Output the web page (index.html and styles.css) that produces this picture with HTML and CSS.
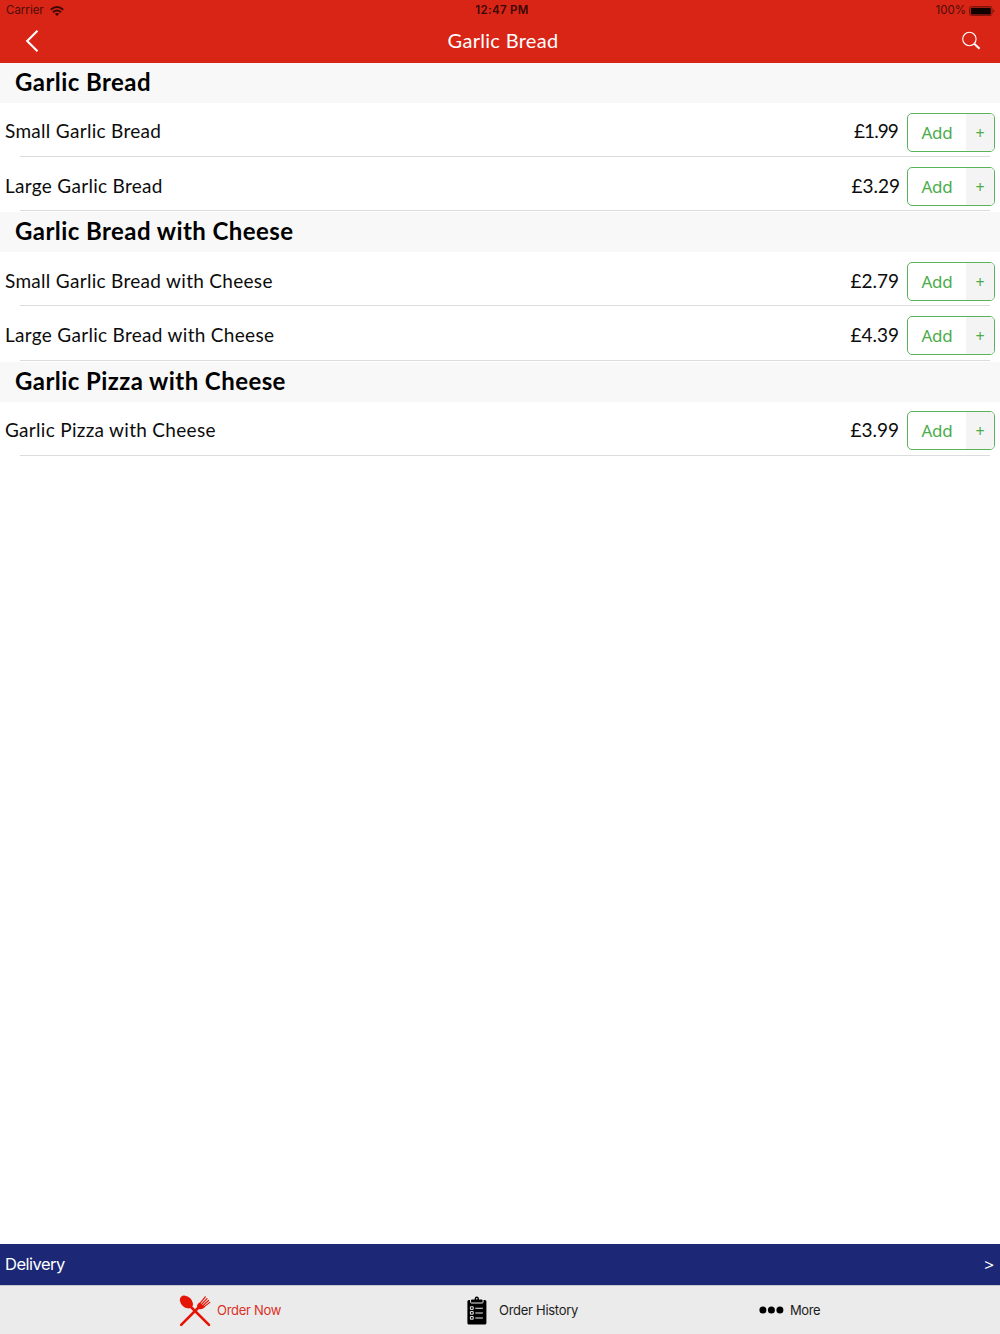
FILE: index.html
```html
<!DOCTYPE html>
<html lang="en">
<head>
<meta charset="utf-8">
<title>Garlic Bread</title>
<link rel="stylesheet" href="styles.css">
</head>
<body>
<div class="screen">
  <header class="header">
    <div class="status">
      <div class="carrier"><span>Carrier</span>
        <svg width="14" height="10" viewBox="0 0 14 10"><g fill="none" stroke="#3a0805" stroke-width="1.9"><path d="M.8 3.8Q7-1.6 13.2 3.8"/><path d="M3 6.2Q7 2.8 11 6.2"/></g><path d="M7 10 4.8 7.7Q7 6.2 9.2 7.7Z" fill="#3a0805"/></svg>
      </div>
      <div class="time">12:47 PM</div>
      <div class="battery"><span>100%</span>
        <svg width="26" height="10" viewBox="0 0 26 10"><rect x=".5" y=".5" width="22.5" height="9" rx="2" fill="none" stroke="#7c140c"/><rect x="1.8" y="1.7" width="20" height="6.8" rx="1" fill="#100201"/><path d="M24.3 3.4Q26.4 5 24.3 6.6Z" fill="#5a0e08"/></svg>
      </div>
    </div>
    <nav class="nav">
      <svg class="back" width="14" height="24" viewBox="0 0 14 24"><path d="M12.5 1.8 2.2 12l10.3 10.2" fill="none" stroke="#fff" stroke-width="2.1"/></svg>
      <h1 class="title">Garlic Bread</h1>
      <svg class="search" width="20" height="20" viewBox="0 0 20 20"><circle cx="8.4" cy="8" r="6.7" fill="none" stroke="#fff" stroke-width="1.1"/><path d="m13.2 12.8 5.4 5" stroke="#fff" stroke-width="2"/></svg>
    </nav>
  </header>

  <main class="menu">
    <section class="group">
      <h2 class="heading">Garlic Bread</h2>
      <div class="item"><span class="name">Small Garlic Bread</span><span class="price narrow">£1.99</span><button class="add"><span class="label">Add</span><span class="plus">+</span></button></div>
      <div class="item"><span class="name">Large Garlic Bread</span><span class="price wide">£3.29</span><button class="add"><span class="label">Add</span><span class="plus">+</span></button></div>
    </section>
    <section class="group">
      <h2 class="heading">Garlic Bread with Cheese</h2>
      <div class="item"><span class="name">Small Garlic Bread with Cheese</span><span class="price">£2.79</span><button class="add"><span class="label">Add</span><span class="plus">+</span></button></div>
      <div class="item"><span class="name">Large Garlic Bread with Cheese</span><span class="price">£4.39</span><button class="add"><span class="label">Add</span><span class="plus">+</span></button></div>
    </section>
    <section class="group">
      <h2 class="heading">Garlic Pizza with Cheese</h2>
      <div class="item"><span class="name">Garlic Pizza with Cheese</span><span class="price">£3.99</span><button class="add"><span class="label">Add</span><span class="plus">+</span></button></div>
    </section>
  </main>

  <div class="delivery"><span class="delivery-label">Delivery</span><span class="arrow">&gt;</span></div>

  <footer class="tabs">
    <a class="tab order">
      <svg width="32" height="32" viewBox="0 0 32 32"><g fill="none" stroke="#e51405" stroke-linecap="round"><path d="M10 10 30 29.8" stroke-width="2.6"/><path d="M21 11 2.2 29.8" stroke-width="2.6"/><g stroke-width="1.2"><path d="m20.5 8.8 5.8-7"/><path d="m22 10 6-6.4"/><path d="m23.3 11.3 6.2-5.8"/><path d="m24.4 12.4 6.4-5"/></g></g><path d="M20.6 7.6 25.8 12.2Q22.6 15.2 19.8 14l-1.6-1.8Q17.4 9.8 20.6 7.6Z" fill="#e51405"/><ellipse cx="7.4" cy="7" rx="7.5" ry="5.3" transform="rotate(43 7.4 7)" fill="#e51405"/></svg>
      <span>Order Now</span>
    </a>
    <a class="tab history">
      <svg width="20" height="29" viewBox="0 0 20 29"><rect x=".4" y="4" width="19" height="24.6" rx="1.6"/><path d="M3.6 3.6v2.6q0 .8.8.8h10.8q.8 0 .8-.8V3.6" fill="none" stroke="#ebebeb" stroke-width="1"/><path d="M4.4 5.8V3.6h3.2Q7.6.5 9.8.5T12 3.6h3.2v2.2Z"/><circle cx="9.8" cy="2.8" r=".8" fill="#ebebeb"/><g fill="none" stroke="#ebebeb"><path d="M3.4 10.8h2.8v2.6H3.4zM3.4 15.6h2.8v2.6H3.4zM3.4 20.6h2.8v2.6H3.4z" stroke-width="1"/><path d="M8.3 12.2h7.6M8.3 17h7.6M8.3 22h7.6" stroke-width="1.1"/></g></svg>
      <span>Order History</span>
    </a>
    <a class="tab more">
      <svg width="25" height="8" viewBox="0 0 25 8"><circle cx="3.9" cy="4" r="3.5"/><circle cx="12.4" cy="4" r="3.5"/><circle cx="20.9" cy="4" r="3.5"/></svg>
      <span>More</span>
    </a>
  </footer>
</div>
</body>
</html>
```
FILE: styles.css
```css
* { box-sizing: border-box; }
body { margin: 0; background: #fff; color: #0c0c0c; font-family: Lato, sans-serif; }
svg { display: block; flex: none; }
.screen { width: 1000px; height: 1334px; display: flex; flex-direction: column; }

.header { height: 63px; background: #d92516; flex: none; }
.status { height: 20px; display: grid; grid-template-columns: 1fr auto 1fr; align-items: center; padding: 1px 5px 0 6px; font: 11.5px/19px Inter, sans-serif; color: #4d0d08; }
.carrier { display: flex; align-items: center; gap: 6px; }
.time { font-weight: 600; letter-spacing: .3px; color: #3a0805; padding-left: 3px; }
.battery { display: flex; align-items: center; justify-content: flex-end; gap: 3px; }
.nav { height: 43px; display: grid; grid-template-columns: 1fr auto 1fr; align-items: center; padding: 0 19px 0 25px; }
.title { margin: 0; padding: 0 0 4px; font-size: 20px; line-height: 24px; font-weight: 400; color: #fff; letter-spacing: .3px; }
.nav .back { margin-bottom: 1px; }
.search { justify-self: end; margin-bottom: 2px; }

.menu { flex: 1; display: flex; flex-direction: column; gap: .9px; }
.heading { margin: 0; height: 40px; padding-left: 15px; background: #f8f8f8; color: #000; font-size: 24px; line-height: 38px; font-weight: 700; letter-spacing: .43px; }
.item { height: 54.2px; display: flex; align-items: center; padding: 4px 5px 0; background: linear-gradient(#dcdcde, #dcdcde) 20px 100% / 970px 1px no-repeat; }
.name { flex: 1; font-size: 19px; line-height: 24px; letter-spacing: .3px; padding-bottom: 1.4px; }
.price { font-size: 19px; line-height: 24px; margin-right: 8px; padding-bottom: 1.4px; }
.price.narrow { letter-spacing: -.9px; margin-right: 9px; }
.price.wide { margin-right: 7px; }
.add { width: 88px; height: 39px; margin: 0; padding: 0; display: flex; overflow: hidden; border: 1px solid #58b35b; border-radius: 5px; background: #fff; color: #4aac4b; font-family: "Noto Sans", sans-serif; }
.label { flex: 1; font-size: 17px; line-height: 37px; letter-spacing: -.2px; }
.plus { width: 28px; height: 38px; background: #f4f4f4; font-size: 16px; line-height: 39px; }

.delivery { height: 41px; flex: none; display: flex; justify-content: space-between; align-items: center; padding: 0 6px 0 5px; background: #1c2876; color: #fff; font: 16.5px/39px Inter, sans-serif; }
.delivery-label { letter-spacing: -.5px; }
.arrow { font: 17px/39px "Noto Sans", sans-serif; }
.tabs { height: 49px; flex: none; display: grid; grid-template-columns: 288px 292px 1fr; align-items: center; padding: 0 0 0 179px; border-top: 1px solid #c5c6d0; background: #ebebeb; color: #1c1c1c; font: 13px/20px Inter, sans-serif; letter-spacing: -.28px; }
.tab { display: flex; align-items: center; }
.tab span { padding-bottom: 1px; }
.order { gap: 6px; color: #dc3024; }
.order svg { margin-top: 2px; }
.history { gap: 12px; }
.more { gap: 6px; letter-spacing: -.4px; }
```
